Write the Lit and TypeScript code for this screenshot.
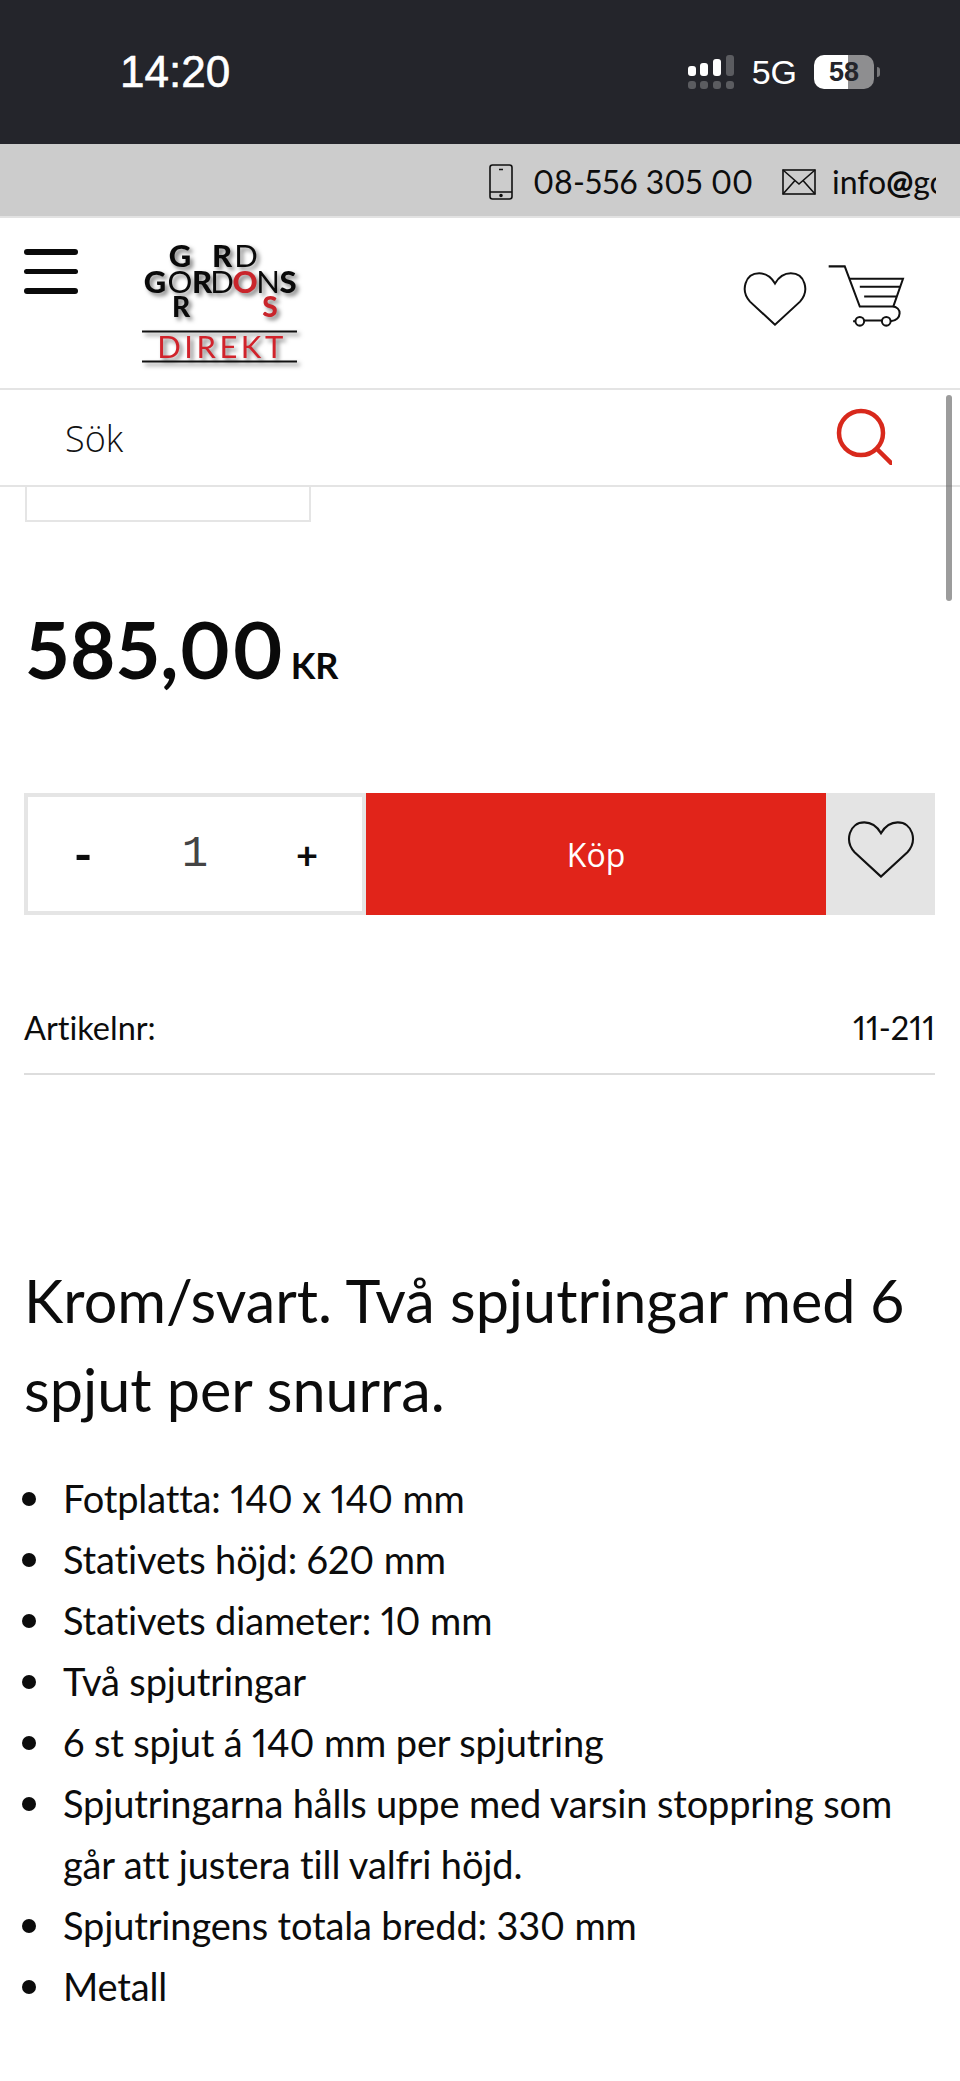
import { LitElement, css, html, svg } from 'lit';
import { customElement } from 'lit/decorators.js';

const heart = svg`<path d="M226 328L150 258C120 225 135 172 178 172C200 172 216 186 226 203C236 186 252 172 274 172C317 172 332 225 302 258Z" fill="none" stroke="#111" stroke-width="6" stroke-linejoin="miter"/>`;

const specs = [
  'Fotplatta: 140 x 140 mm',
  'Stativets höjd: 620 mm',
  'Stativets diameter: 10 mm',
  'Två spjutringar',
  '6 st spjut á 140 mm per spjutring',
  'Spjutringarna hålls uppe med varsin stoppring som går att justera till valfri höjd.',
  'Spjutringens totala bredd: 330 mm',
  'Metall',
];

@customElement('app-root')
export class AppRoot extends LitElement {
  static styles = css`
    :host {
      display: block;
      position: relative;
      height: 2081px;
      overflow: hidden;
      background: #fff;
      color: #0c0c0c;
      font-family: Lato, 'Noto Sans', sans-serif;
      font-variant-numeric: proportional-nums;
      font-variant-ligatures: none;
    }
    .status {
      height: 144px;
      background: #24252b;
      color: #fff;
      display: flex;
      align-items: center;
      padding: 0 80px 0 120px;
      font-family: 'Liberation Sans', Arial, sans-serif;
    }
    .time {
      font-size: 44px;
      font-weight: 400;
      -webkit-text-stroke: 0.6px #fff;
      flex: 1;
      margin-bottom: 1px;
    }
    .net {
      font-size: 34px;
      margin: 0 17px 0 18px;
    }
    .signal {
      display: block;
    }
    .battery {
      width: 60px;
      height: 34px;
      border-radius: 10px;
      background: linear-gradient(90deg, #fff 0 34px, #8e8e90 34px);
      color: #24252b;
      font-size: 27px;
      font-weight: 700;
      line-height: 34px;
      text-align: center;
    }
    .nub {
      width: 3px;
      height: 10px;
      margin-left: 3px;
      background: #77777a;
      border-radius: 0 3px 3px 0;
    }
    .contact {
      height: 69px;
      padding: 3px 24px 0 0;
      background: #cccccc;
      border-bottom: 2px solid #e2e2e2;
      display: flex;
      align-items: center;
      justify-content: flex-end;
      font-size: 32px;
      color: #0d0d0d;
    }
    .contact svg {
      display: block;
    }
    .phone-no {
      margin: 0 29px 0 20px;
      white-space: nowrap;
    }
    .env {
      margin-right: 16px;
    }
    .mail {
      width: 104px;
      overflow: hidden;
      white-space: nowrap;
    }
    .mail b {
      font-weight: 900;
    }
    .header {
      height: 170px;
      border-bottom: 2px solid #e4e4e4;
      display: flex;
      padding-left: 24px;
    }
    .burger {
      width: 54px;
      margin-top: 31px;
      display: flex;
      flex-direction: column;
      gap: 14px;
    }
    .burger span {
      display: block;
      height: 5.5px;
      border-radius: 3px;
      background: #0a0a0a;
    }
    .logo {
      display: block;
      margin: 25px 0 0 64px;
      filter: drop-shadow(3px 3px 2px rgba(0, 0, 0, 0.5));
    }
    .logo text {
      font-family: Lato, sans-serif;
      text-anchor: middle;
    }
    .header-icons {
      margin-left: auto;
      display: flex;
      padding-right: 55px;
    }
    .header-icons .like {
      margin: 54px 21px 0 0;
    }
    .header-icons .cart {
      margin-top: 47px;
    }
    .search {
      height: 93px;
      padding: 2px 65px 0;
      border-bottom: 2px solid #e4e4e4;
      display: flex;
      align-items: center;
      justify-content: space-between;
      font: 300 36px 'Open Sans', sans-serif;
      color: #111;
    }
    .search svg {
      margin: -6px 3px 0 0;
    }
    .gallery-end {
      width: 282px;
      height: 33px;
      margin-left: 25px;
      border: 2px solid #e5e5e5;
      border-top: 0;
    }
    .price {
      margin: 77px 0 0 26px;
      display: flex;
      align-items: baseline;
      font-size: 78px;
      line-height: 100px;
      font-weight: 700;
      letter-spacing: 0.9px;
      color: #0a0a0a;
    }
    .price small {
      font-size: 36px;
      letter-spacing: 0;
      margin-left: 6px;
    }
    .buy {
      display: flex;
      height: 122px;
      margin: 78px 25px 0 24px;
    }
    .qty {
      width: 342px;
      box-sizing: border-box;
      border: 4px solid #e5e5e5;
      display: grid;
      grid-template-columns: 110px 1fr 110px;
      align-items: center;
      text-align: center;
      font-size: 38px;
      font-weight: 700;
    }
    .qty .num {
      font: 400 44px 'Liberation Mono', monospace;
      color: #444;
    }
    .qty .minus {
      font-size: 50px;
    }
    .buy-btn {
      flex: 1;
      display: flex;
      align-items: center;
      justify-content: center;
      background: #e1241a;
      color: #fff;
      font: 400 32px 'Open Sans', sans-serif;
    }
    .wish {
      width: 109px;
      display: flex;
      align-items: center;
      justify-content: center;
      background: #e4e4e4;
    }
    .wish svg {
      margin-bottom: 10px;
    }
    .sku {
      display: flex;
      justify-content: space-between;
      margin: 0 25px 0 24px;
      padding: 91px 0 0;
      height: 67px;
      line-height: 44px;
      border-bottom: 2px solid #ddd;
      font-size: 32.5px;
    }
    h1 {
      margin: 181px 25px 0 24px;
      font-size: 59.3px;
      font-weight: 400;
      line-height: 89px;
    }
    ul {
      margin: 34px 25px 0 0;
      padding: 0;
      list-style: none;
      font-size: 38px;
      line-height: 61px;
      letter-spacing: -0.15px;
    }
    li {
      display: flex;
    }
    li::before {
      content: '';
      flex: none;
      width: 14px;
      height: 14px;
      margin: 24px 27px 0 22px;
      border-radius: 50%;
      background: #0c0c0c;
    }
    .scrollbar {
      position: absolute;
      left: 946px;
      top: 395px;
      width: 6px;
      height: 206px;
      border-radius: 3px;
      background: rgba(90, 90, 90, 0.6);
    }
  `;

  render() {
    return html`
      <div class="status">
        <div class="time">14:20</div>
        <svg class="signal" width="46" height="34" viewBox="0 0 46 34">
          <g fill="#fff">
            <rect x="0" y="11" width="8" height="10" rx="3" />
            <rect x="12" y="8" width="8" height="13" rx="3" />
            <rect x="25" y="4" width="8" height="17" rx="3" />
          </g>
          <rect x="38" y="0" width="8" height="21" rx="3" fill="#5b5c60" />
          <g fill="#5b5c60">
            <rect x="0" y="26" width="8" height="8" rx="3" />
            <rect x="12" y="26" width="8" height="8" rx="3" />
            <rect x="25" y="26" width="8" height="8" rx="3" />
            <rect x="38" y="26" width="8" height="8" rx="3" />
          </g>
        </svg>
        <div class="net">5G</div>
        <div class="battery">58</div>
        <div class="nub"></div>
      </div>

      <div class="contact">
        <svg class="phone" width="24" height="36" viewBox="0 0 24 36" fill="none" stroke="#111" stroke-width="1.6">
          <rect x="1" y="1" width="22" height="34" rx="2.5" />
          <path d="M1 28H23M10 5.500H14" />
          <circle cx="12" cy="31.500" r="1" fill="#111" />
        </svg>
        <span class="phone-no">08-556 305 00</span>
        <svg class="env" width="34" height="26" viewBox="0 0 34 26" fill="none" stroke="#111" stroke-width="1.6">
          <rect x="1" y="1" width="32" height="24" />
          <path d="M1 1L17 15L33 1M1 25L13 11.500M33 25L21 11.500" />
        </svg>
        <span class="mail">info<b>@</b>gordonsdirekt.se</span>
      </div>

      <div class="header">
        <div class="burger"><span></span><span></span><span></span></div>
        <svg class="logo" width="160" height="124" viewBox="142 243 160 124">
          <g font-weight="900" font-size="31" fill="#0a0a0a">
            <text x="180" y="267">G</text>
            <text x="222" y="267">R</text>
            <text x="246" y="267" font-weight="400">D</text>
            <text x="155" y="293">G</text>
            <text x="180" y="293" font-weight="400">O</text>
            <text x="202" y="293">R</text>
            <text x="222" y="293" font-weight="400">D</text>
            <text x="245" y="293" fill="#c9252b">O</text>
            <text x="268" y="293" font-weight="400">N</text>
            <text x="288" y="293">S</text>
            <text x="181" y="317" font-size="28">R</text>
            <text x="270" y="317" font-size="28" fill="#c9252b">S</text>
          </g>
          <path d="M142 331.500H297M142 361.500H297" stroke="#111" stroke-width="2" />
          <text x="222" y="358" font-size="31" letter-spacing="3.500" fill="#d1232b">DIREKT</text>
        </svg>
        <div class="header-icons">
          <svg class="like" width="64" height="54" viewBox="130 168 192 164">${heart}</svg>
          <svg class="cart" width="77" height="62" viewBox="383 148 230 185" fill="none" stroke="#111" stroke-width="6">
            <path d="M385 152H433L478 272H575C604 272 606 312 570 316" />
            <path d="M447 189H607L578 272M478 213H597M491 242H587" />
            <circle cx="478" cy="316" r="13" />
            <circle cx="557" cy="316" r="13" />
            <path d="M491 314H544M458 316H465" />
          </svg>
        </div>
      </div>

      <div class="search">
        <span>Sök</span>
        <svg width="58" height="58" viewBox="0 0 58 58" fill="none" stroke="#d8291c" stroke-width="4.500" stroke-linecap="round">
          <circle cx="27" cy="26" r="22" />
          <path d="M44 43L57 56" />
        </svg>
      </div>
      <div class="gallery-end"></div>

      <div class="price">585,00<small>KR</small></div>

      <div class="buy">
        <div class="qty">
          <span class="minus">-</span>
          <span class="num">1</span>
          <span>+</span>
        </div>
        <div class="buy-btn">Köp</div>
        <div class="wish"><svg width="68" height="57" viewBox="130 168 192 164">${heart}</svg></div>
      </div>

      <div class="sku"><span>Artikelnr:</span><span>11-211</span></div>

      <h1>Krom/svart. Två spjutringar med 6 spjut per snurra.</h1>
      <ul>
        ${specs.map((s) => html`<li><span>${s}</span></li>`)}
      </ul>

      <div class="scrollbar"></div>
    `;
  }
}
